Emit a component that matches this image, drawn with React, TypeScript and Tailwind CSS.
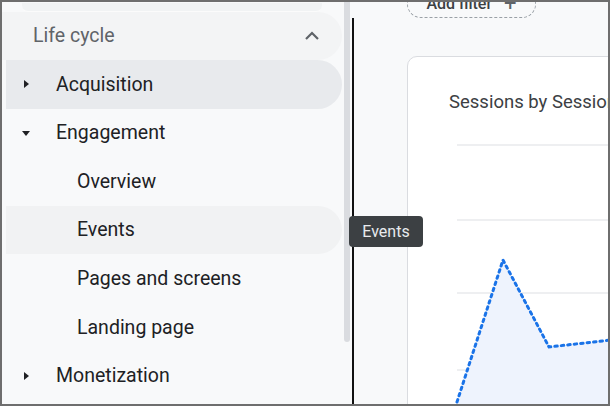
import React from "react";

const font = { fontFamily: "Roboto, 'Noto Sans', sans-serif" };

function Caret({ open }: { open?: boolean }) {
  return (
    <svg width="10" height="10" viewBox="0 0 10 10" className="shrink-0">
      {open ? <path d="M1 3h8L5 8z" fill="#202124" /> : <path d="M3 1v8l5-4z" fill="#202124" />}
    </svg>
  );
}

function NavRow({
  label,
  caret,
  open,
  sub,
  bg,
}: {
  label: string;
  caret?: boolean;
  open?: boolean;
  sub?: boolean;
  bg?: string;
}) {
  const inset = bg ? 4 : 0;
  return (
    <div className={`flex h-[48.6px] items-center rounded-r-full ${bg ? `ml-[4px] ${bg}` : ""}`}>
      {sub ? (
        <span className="text-[19.5px] text-[#202124]" style={{ paddingLeft: 75 - inset }}>
          {label}
        </span>
      ) : (
        <>
          <span className="flex justify-end pr-[26px]" style={{ width: 55 - inset }}>
            {caret && <Caret open={open} />}
          </span>
          <span className="-ml-[1px] text-[19.5px] text-[#202124]">{label}</span>
        </>
      )}
    </div>
  );
}

export default function App() {
  return (
    <div className="relative flex h-[406px] w-[610px] overflow-hidden border-2 border-[#6e6e6e] bg-[#f8f9fa]" style={font}>
      {/* sidebar */}
      <div className="flex w-[340px] shrink-0 flex-col bg-[#f8f9fa]">
        <div className="mx-[20px] mt-[1px] h-[9px] rounded-b-md border-b border-[#fbfbfb] bg-[#f1f3f4]" />
        <div className="flex h-[48px] items-center justify-between rounded-r-full bg-[#f3f4f5] pl-[31px] pr-[22px]">
          <span className="text-[19.5px] text-[#5f6368]">Life cycle</span>
          <svg width="16" height="10" viewBox="0 0 16 10">
            <path d="M2 8l6-6 6 6" fill="none" stroke="#5f6368" strokeWidth="2.2" />
          </svg>
        </div>
        <NavRow label="Acquisition" caret bg="bg-[#e8eaed]" />
        <NavRow label="Engagement" caret open />
        <NavRow label="Overview" sub />
        <NavRow label="Events" sub bg="bg-[#f1f2f3]" />
        <NavRow label="Pages and screens" sub />
        <NavRow label="Landing page" sub />
        <NavRow label="Monetization" caret />
      </div>

      {/* scrollbar */}
      <div className="flex w-[10px] shrink-0 flex-col bg-[#f8f9fa] px-[2px]">
        <div className="h-[340px] rounded-b-sm bg-[#dadce0]" />
      </div>

      {/* divider line */}
      <div className="flex w-[2px] shrink-0 flex-col pt-[16px]">
        <div className="flex-1 bg-[#111]" />
      </div>

      {/* main */}
      <div className="flex min-w-0 flex-1 flex-col pl-[53px]">
        <div className="-mt-[12px] flex h-[28px] w-[129px] shrink-0 items-center justify-center gap-3 rounded-full border border-dashed border-[#9aa0a6]">
          <span className="text-[16px] font-medium text-[#3c4043]">Add filter</span>
          <span className="text-[22px] leading-none text-[#5f6368]">+</span>
        </div>
        <div className="mt-[38px] h-[400px] w-[320px] shrink-0 rounded-[10px] border border-[#dadce0] bg-white">
          <div className="whitespace-nowrap pl-[41px] pt-[32px] text-[18.5px] text-[#3c4043]">
            Sessions by Session default channel group
          </div>
          <svg width="320" height="360" viewBox="0 0 320 360" className="-mt-[17px] block">
            {[88, 163, 236, 313].map((y) => (
              <line key={y} x1="49" x2="320" y1={y - 43} y2={y - 43} stroke="#e8eaed" strokeWidth="1.5" />
            ))}
            <path d="M49 302 L95 160 L141 247 L203 240 L320 230 L320 340 L49 340 Z" fill="#eef3fd" />
            <path
              d="M49 302 L95 160 L141 247 L203 240 L320 230"
              fill="none"
              stroke="#1a73e8"
              strokeWidth="3"
              strokeDasharray="2.5 4"
              strokeLinecap="round"
            />
          </svg>
        </div>
      </div>

      {/* tooltip */}
      <div className="absolute left-[347px] top-[214px] flex h-[31px] w-[74px] items-center justify-center rounded-[4px] bg-[#3c4043] text-[16px] text-[#e8eaed]">
        Events
      </div>
    </div>
  );
}
